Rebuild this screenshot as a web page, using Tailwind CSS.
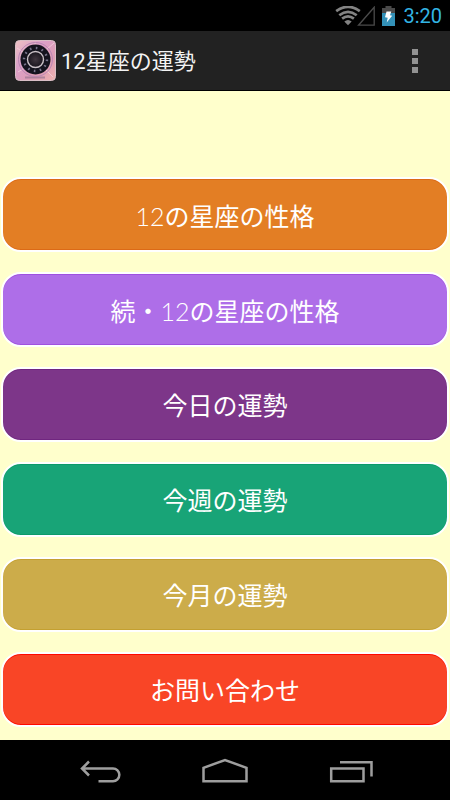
<!DOCTYPE html>
<html lang="ja">
<head>
<meta charset="utf-8">
<meta name="viewport" content="width=device-width, initial-scale=1">
<title>12星座の運勢</title>
<script src="https://cdn.jsdelivr.net/npm/@tailwindcss/browser@4"></script>
</head>
<body class="min-h-screen flex flex-col bg-[#ffffcc] font-['Roboto','Noto_Sans_CJK_JP',sans-serif]">
  <div class="h-[31px] shrink-0 bg-black flex items-center justify-end pr-2">
    <svg class="w-[26px] h-5" viewBox="0 0 26 20" fill="none" stroke="#838383" stroke-width="2.7" role="img" aria-label="Wi-Fi">
      <path d="M1.2 5.2Q13-3.6 24.8 5.2"/>
      <path d="M4.3 9.2Q13 2.4 21.7 9.2"/>
      <path d="M7.1 12.6Q13 8 18.9 12.6"/>
      <path d="M9.3 15.6Q13 12.6 16.7 15.6L13 19.2Z" fill="#838383" stroke="none"/>
    </svg>
    <svg class="w-[18px] h-5 -ml-1" viewBox="0 0 18 20" fill="none" stroke="#4b4b4b" stroke-width="1.3" role="img" aria-label="電波"><path d="M1.500 19.200H17.200V1.200Z"/></svg>
    <svg class="w-[13px] h-5 ml-[7px]" viewBox="0 0 13 20" role="img" aria-label="充電中">
      <path fill="#4a4a4a" d="M3.500 0h6v2H13v6H0V2h3.500z"/>
      <path fill="#3391b8" d="M0 7h13v13H0z"/>
      <path fill="#fff" d="M4.500 5.500h4.800L8 9.200l2.200.6-5.500 6.600 1-4.700-2.700-.5z"/>
    </svg>
    <time class="ml-2 text-xl leading-6 text-[#33b5e5]">3:20</time>
  </div>
  <header class="h-[60px] shrink-0 bg-[#222] border-b border-black flex items-center pl-[15px] pr-[29px]">
    <svg class="w-[41px] h-[41px] shrink-0" viewBox="0 0 41 41" aria-hidden="true">
      <defs>
        <linearGradient id="sky" x1="0" y1="0" x2="1" y2="1">
          <stop offset="0" stop-color="#efc3c4"/><stop offset=".35" stop-color="#dba0c8"/><stop offset=".7" stop-color="#df9db4"/><stop offset="1" stop-color="#f0b5b0"/>
        </linearGradient>
        <radialGradient id="hub"><stop offset="0" stop-color="#40363f"/><stop offset="1" stop-color="#18141d"/></radialGradient>
      </defs>
      <rect x=".5" y=".5" width="40" height="40" rx="4" fill="url(#sky)" stroke="#d9bfc6"/>
      <path d="M2 8l9 6M3 32l8-5M31 10l8-7M31 30l7 7M20 2v5" stroke="#f3d0da" stroke-width=".8"/>
      <path d="M10 37.500h20" stroke="#8d6f8c" stroke-width="2" opacity=".6"/>
      <circle cx="20.500" cy="19.500" r="17" fill="none" stroke="#b987b4"/>
      <circle cx="20.500" cy="19.500" r="15" fill="#14131e"/>
      <circle cx="20.500" cy="19.500" r="11.500" fill="none" stroke="#77738a" stroke-width="2.400" stroke-dasharray="1.600 4.420"/>
      <circle cx="20.500" cy="19.500" r="8" fill="url(#hub)" stroke="#c9c0c6" stroke-width="1.400"/>
    </svg>
    <h1 class="ml-[5px] pt-0.5 grow text-[22px] leading-8 text-[#f3f3f3]">12星座の運勢</h1>
    <button type="button" aria-label="メニュー" class="flex flex-col gap-[3px] w-3 h-8 items-center justify-center">
      <span class="w-[6px] h-[6px] shrink-0 bg-[#929292]"></span>
      <span class="w-[6px] h-[6px] shrink-0 bg-[#929292]"></span>
      <span class="w-[6px] h-[6px] shrink-0 bg-[#929292]"></span>
    </button>
  </header>
  <main class="grow flex flex-col gap-5 px-px pt-[86px] pb-[13px] text-[25px] leading-9 text-white">
    <button type="button" class="h-[75px] pt-1 rounded-[20px] border-2 border-white bg-[#e37e24] shadow-[inset_0_1px_#dc6a16,inset_0_-1px_#dc6a16]"><span class="font-['Liberation_Sans_Narrow','Lato'] font-light">12</span>の星座の性格</button>
    <button type="button" class="h-[75px] pt-1 rounded-[20px] border-2 border-white bg-[#ae6ee8] shadow-[inset_0_1px_#a050e0,inset_0_-1px_#a050e0]">続・<span class="font-['Liberation_Sans_Narrow','Lato'] font-light">12</span>の星座の性格</button>
    <button type="button" class="h-[75px] pt-1 rounded-[20px] border-2 border-white bg-[#7d3689] shadow-[inset_0_1px_#702680,inset_0_-1px_#702680]">今日の運勢</button>
    <button type="button" class="h-[75px] pt-1 rounded-[20px] border-2 border-white bg-[#18a477] shadow-[inset_0_1px_#0c9a6a,inset_0_-1px_#0c9a6a]">今週の運勢</button>
    <button type="button" class="h-[75px] pt-1 rounded-[20px] border-2 border-white bg-[#ccac4a] shadow-[inset_0_1px_#c4a030,inset_0_-1px_#c4a030]">今月の運勢</button>
    <button type="button" class="h-[75px] pt-1 rounded-[20px] border-2 border-white bg-[#f94526] shadow-[inset_0_1px_#ff0800,inset_0_-1px_#ff0800]">お問い合わせ</button>
  </main>
  <nav class="h-[60px] shrink-0 bg-black flex items-center justify-center gap-[78px]">
    <button type="button" aria-label="戻る"><svg class="w-12 h-[30px]" viewBox="0 0 48 30" fill="none" stroke="#9e9e9e" stroke-width="2.500"><path d="M6.500 13.500H38a6.300 6.300 0 0 1 0 12.700H23.500M14 6.500L7 13.500L14 20.500"/></svg></button>
    <button type="button" aria-label="ホーム"><svg class="w-12 h-[30px]" viewBox="0 0 48 30" fill="none" stroke="#9e9e9e" stroke-width="2.500"><path d="M2.500 26.300V12.800L24 5L45.500 12.800V26.300Z"/></svg></button>
    <button type="button" aria-label="最近使ったアプリ"><svg class="w-12 h-[30px]" viewBox="0 0 48 30" fill="none" stroke="#9e9e9e" stroke-width="2.500"><path d="M4.200 13.500H36.500V26.300H4.200ZM13 7.300H44.500V21.500"/></svg></button>
  </nav>
</body>
</html>
